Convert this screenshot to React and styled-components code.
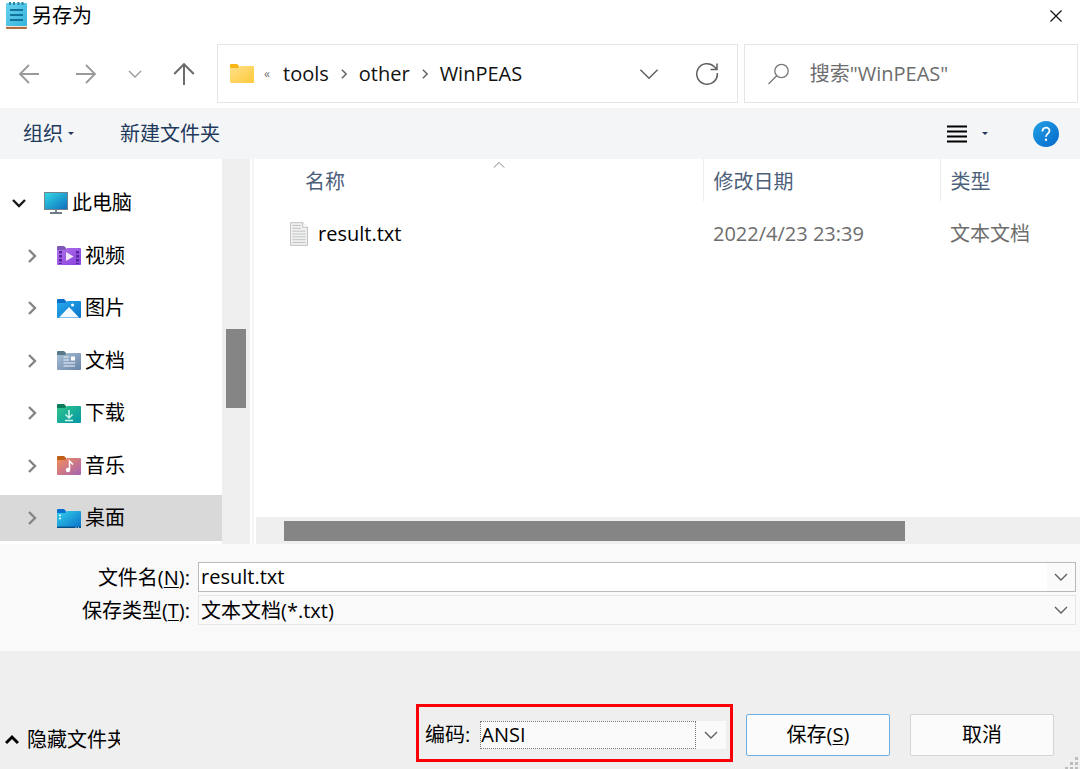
import React from "react";
import styled, { createGlobalStyle } from "styled-components";

const GlobalStyle = createGlobalStyle`
  * {
    box-sizing: border-box;
  }
  body {
    margin: 0;
    background: #fff;
    color: #000;
  }
  body, button, input, select {
    font-family: "Open Sans", "Noto Sans CJK SC", sans-serif;
    font-size: 20px;
    line-height: 28px;
  }
  button {
    padding: 0;
    border: none;
    background: none;
    color: inherit;
    cursor: pointer;
  }
  svg {
    display: block;
    flex: none;
  }
  u {
    text-decoration-thickness: 1px;
    text-underline-offset: 2px;
  }
`;

const Dialog = styled.div`
  display: flex;
  flex-direction: column;
  min-height: 100vh;
`;
const TitleBar = styled.header`
  display: flex;
  align-items: center;
  gap: 5px;
  height: 32px;
  padding: 0 17px 0 6px;
`;
const Title = styled.h1`
  flex: 1;
  margin: 0;
  font-size: 20px;
  font-weight: 400;
`;
const NavBar = styled.nav`
  display: flex;
  align-items: center;
  gap: 6px;
  padding: 12px 2px 5px 0;
`;
const NavButtons = styled.div`
  display: flex;
  align-items: center;
  gap: 25px;
  width: 211px;
  padding-left: 17px;
`;
const IconButton = styled.button`
  display: flex;
  align-items: center;
  justify-content: center;
  flex: none;
  width: ${(p) => p.$width || 24}px;
  height: 30px;
  color: ${(p) => p.$color || "#5f5f5f"};
`;
const AddressBar = styled.div`
  display: flex;
  align-items: center;
  flex: 1;
  height: 59px;
  padding: 0 18px 0 12px;
  border: 1px solid #e5e5e5;
`;
const Overflow = styled.span`
  width: 29px;
  padding-left: 10px;
  color: #777;
  font-size: 12px;
`;
const Crumbs = styled.div`
  display: flex;
  align-items: center;
  flex: 1;
  gap: 10px;
  color: #666;
`;
const Crumb = styled.a`
  color: #111;
  text-decoration: none;
`;
const AddressTools = styled.div`
  display: flex;
  gap: 34px;
`;
const SearchBox = styled.label`
  display: flex;
  align-items: center;
  gap: 20px;
  width: 31%;
  height: 59px;
  padding: 0 22px;
  border: 1px solid #e5e5e5;
  color: #777;
`;
const SearchInput = styled.input`
  flex: 1;
  min-width: 0;
  padding: 0;
  border: none;
  outline: none;
  background: none;

  &::placeholder {
    color: #6d6d6d;
    opacity: 1;
  }
`;
const Toolbar = styled.div`
  display: flex;
  align-items: center;
  height: 51px;
  padding: 0 21px 0 23px;
  background: #f4f5f7;
  color: #1e395b;
`;
const ToolbarButton = styled.button`
  display: flex;
  align-items: center;
  gap: 5px;
  margin-right: ${(p) => p.$space || 0}px;
`;
const ToolbarRight = styled.div`
  display: flex;
  align-items: center;
  gap: 45px;
  margin-left: auto;
`;
const ViewButton = styled.button`
  display: flex;
  align-items: center;
  gap: 15px;
`;
const Triangle = styled.span`
  border: solid transparent;
  border-width: 3px 3px 0;
  border-top-color: #1e395b;
`;

const Body = styled.main`
  display: flex;
  flex: 1;
`;
const Tree = styled.ul`
  display: flex;
  flex-direction: column;
  justify-content: space-between;
  width: 222px;
  margin: 0;
  padding: 21px 0 3px;
  list-style: none;
`;
const TreeRow = styled.li`
  display: flex;
  align-items: center;
  height: 46px;
  padding-left: ${(p) => (p.$root ? 12 : 25)}px;
  background: ${(p) => (p.$selected ? "#d9d9d9" : "none")};
`;
const Expander = styled.button`
  display: flex;
  justify-content: center;
  width: 14px;
  margin-right: 18px;
  color: ${(p) => (p.$open ? "#1a1a1a" : "#858585")};
`;
const TreeLink = styled.a`
  display: flex;
  align-items: center;
  gap: 4px;
  color: #000;
  text-decoration: none;
`;
const VerticalTrack = styled.div`
  display: flex;
  flex-direction: column;
  width: 28px;
  padding: 0 4px;
  background: #efefef;
`;
const HorizontalTrack = styled.div`
  display: flex;
  height: 27px;
  padding: 4px 0 3px;
  background: #efefef;
`;
const Space = styled.div`
  flex: ${(p) => p.$size} 1 0;
`;
const Thumb = styled.div`
  flex: ${(p) => p.$size} 1 0;
  background: #858585;
`;
const Files = styled.section`
  display: flex;
  flex-direction: column;
  justify-content: space-between;
  flex: 1;
  margin-left: 2px;
  padding-left: 2px;
  border-left: 2px solid #f4f4f4;
`;
const FileTable = styled.table`
  width: 100%;
  border-collapse: collapse;
  table-layout: fixed;
`;
const HeadCell = styled.th`
  position: relative;
  width: ${(p) => p.$width || "auto"};
  height: 42px;
  padding: 4px 0 0 ${(p) => p.$indent || 10}px;
  border-right: ${(p) => (p.$last ? "none" : "1px solid #ececec")};
  color: #4c607a;
  font-weight: 400;
  text-align: left;
`;
const SortMark = styled.span`
  position: absolute;
  top: 0;
  left: 53%;
  color: #6d6d6d;
`;
const Cell = styled.td`
  height: 66px;
  padding: 0 0 0 ${(p) => p.$indent || 10}px;
  color: #6d6d6d;
`;
const FileName = styled.span`
  display: flex;
  align-items: center;
  gap: 10px;
  color: #000;
`;

const Form = styled.section`
  display: grid;
  grid-template-columns: 190px 1fr;
  align-content: start;
  gap: 3px 8px;
  height: 107px;
  padding: 18px 4px 0 0;
  background: #f9f9f9;
`;
const FieldLabel = styled.label`
  padding-top: 2px;
  text-align: right;
`;
const Combo = styled.div`
  display: flex;
  height: 30px;
  border: 1px solid ${(p) => (p.$plain ? "#e6e6e6" : "#b9b9b9")};
  background: ${(p) => (p.$plain ? "#fafafa" : "#fff")};
`;
const ComboInput = styled.input`
  flex: 1;
  min-width: 0;
  padding: 0 0 0 2px;
  border: none;
  outline: none;
  background: none;
`;
const SelectWrap = styled.div`
  display: grid;
  grid-template-columns: 1fr 28px;
  align-items: center;
  flex: 1;
  color: #5f5f5f;

  select,
  svg {
    grid-row: 1;
  }
  svg {
    grid-column: 2;
    justify-self: center;
    pointer-events: none;
  }
`;
const Select = styled.select`
  grid-column: 1 / 3;
  height: 28px;
  padding: 2px 0 0 2px;
  border: none;
  outline: none;
  background: none;
  color: #000;
  line-height: 26px;
  appearance: none;
`;
const DropButton = styled.button`
  display: flex;
  align-items: center;
  justify-content: center;
  width: 28px;
  background: #fafafa;
  color: #5f5f5f;
`;

const Footer = styled.footer`
  position: relative;
  display: flex;
  align-items: flex-end;
  height: 118px;
  padding: 0 26px 7px 5px;
  background: #efefef;
`;
const HideButton = styled.button`
  display: flex;
  align-items: center;
  gap: 8px;
  height: 44px;
  margin-right: auto;
`;
const HideLabel = styled.span`
  width: 93px;
  overflow: hidden;
  white-space: nowrap;
  text-align: left;
`;
const Encoding = styled.div`
  display: flex;
  align-items: center;
  gap: 10px;
  width: 317px;
  height: 58px;
  margin-right: 13px;
  padding: 4px 4px 0 6px;
  border: 3px solid #fb0007;
`;
const EncodingBox = styled(SelectWrap)`
  grid-template-columns: 216px 1fr;
  height: 28px;
  background: #fafafa;

  select {
    padding: 0 0 0 1px;
  }
`;
const EncodingFocus = styled.span`
  grid-row: 1;
  grid-column: 1;
  align-self: stretch;
  border: 1px dotted #777;
  pointer-events: none;
`;
const Actions = styled.div`
  display: flex;
  gap: 20px;
  padding-bottom: 6px;
`;
const ActionButton = styled.button`
  width: 144px;
  height: 42px;
  border: 1px solid ${(p) => (p.$primary ? "#6aaee3" : "#d5d5d5")};
  border-radius: 2px;
  background: #fbfbfb;
`;
const Grip = styled.svg`
  position: absolute;
  right: 0;
  bottom: 0;
`;

const paths = {
  down: "M1 4l6 6 6-6",
  up: "M1 10l6-6 6 6",
  right: "M4 1l6 6-6 6",
};

const Chevron = ({ dir = "down", size = 14, stroke = 1 }) => (
  <svg width={size} height={size} viewBox="0 0 14 14" fill="none" stroke="currentColor" strokeWidth={stroke}>
    <path d={paths[dir]} />
  </svg>
);

const Arrow = ({ angle = 0, size = 22 }) => (
  <svg width={size} height={size} viewBox="0 0 22 22" fill="none" stroke="currentColor" strokeWidth="1.8">
    <g transform={`rotate(${angle} 11 11)`}>
      <path d="M21 11H2M11 2l-9 9 9 9" />
    </g>
  </svg>
);

const NotepadIcon = () => (
  <svg width="21" height="28" viewBox="0 0 21 28">
    <defs>
      <linearGradient id="pad" x1="0" y1="0" x2="1" y2="1">
        <stop offset="0" stopColor="#6ad2ee" />
        <stop offset="1" stopColor="#35b3dc" />
      </linearGradient>
    </defs>
    <rect y="22" width="21" height="5" rx="1" fill="#b36a3c" />
    <rect y="22" width="21" height="3" fill="#f1e6de" />
    <rect y="1" width="21" height="23" rx="1" fill="url(#pad)" />
    <path d="M4 0v3M8 0v3M12.500 0v3M16.500 0v3" stroke="#2387a8" strokeWidth="2" />
    <path d="M4 8h13M4 13h13M4 18h13" stroke="#12749a" strokeWidth="1.8" />
  </svg>
);

const folderColors = {
  yellow: ["#ffe08a", "#ffca3a", "#f9b716"],
  video: ["#b273ed", "#8840dc", "#8059b8"],
  picture: ["#27abee", "#0a73c9", "#0a6fc9"],
  document: ["#a9bfd6", "#6885a6", "#587987"],
  download: ["#2fc58c", "#0496a5", "#0b7d5b"],
  music: ["#f78e57", "#a463b5", "#bf601a"],
  desktop: ["#33d2ec", "#0a6fc8", "#0a6fd0"],
};

const folderMarks = {
  video: (
    <>
      <path d="M3.500 5v13M20.500 5v13" stroke="#54259c" strokeWidth="3" strokeDasharray="2.500 1.500" />
      <path d="M9 6v9l7.500-4.500z" fill="#f1e9fa" />
    </>
  ),
  picture: (
    <>
      <path d="M2 18.500L12 8l10 10.500z" fill="#f1f8ff" />
      <circle cx="15.500" cy="6" r="1.500" fill="#fff" />
    </>
  ),
  document: (
    <>
      <path d="M6.500 6H12M6.500 9H12M6.500 12h11.500M6.500 15h11.500" stroke="#eef4fa" strokeWidth="1.200" />
      <rect x="14" y="5.500" width="4" height="4" fill="#fff" />
    </>
  ),
  download: <path d="M12 6v8M8.500 10.500L12 14l3.500-3.500M8 16.500h8" fill="none" stroke="#d5f8ee" strokeWidth="1.500" />,
  music: (
    <>
      <circle cx="11" cy="14" r="2.200" fill="#fff" />
      <path d="M12.500 14V5l3.500 3.500" fill="none" stroke="#fff" strokeWidth="1.500" />
    </>
  ),
  desktop: (
    <>
      <path d="M2 6.500h2M2 9.500h2" stroke="#e5fbff" strokeWidth="1.500" />
      <path d="M0 18.300h24" stroke="#084c84" strokeWidth="1.400" />
      <path d="M18.500 18.300h1M21 18.300h1" stroke="#c7e6f8" strokeWidth="1" />
    </>
  ),
};

const FolderIcon = ({ kind }) => {
  const [from, to, tab] = folderColors[kind];
  return (
    <svg width="24" height="19" viewBox="0 0 24 19">
      <defs>
        <linearGradient id={kind} x1="0" y1="0" x2="1" y2="1">
          <stop offset="0" stopColor={from} />
          <stop offset="1" stopColor={to} />
        </linearGradient>
      </defs>
      <path d="M0 1q0-1 1-1h6l2 2v3H0z" fill={tab} />
      <path d="M0 4h8l2-2h13q1 0 1 1v15q0 1-1 1H1q-1 0-1-1z" fill={`url(#${kind})`} />
      {folderMarks[kind]}
    </svg>
  );
};

const ComputerIcon = () => (
  <svg width="24" height="22" viewBox="0 0 24 22">
    <defs>
      <linearGradient id="screen" x1="0" y1="0" x2="1" y2="1">
        <stop offset="0" stopColor="#35dbe6" />
        <stop offset="1" stopColor="#0b6dbd" />
      </linearGradient>
    </defs>
    <rect x="0.500" y="0.500" width="23" height="17" fill="url(#screen)" stroke="#74828c" />
    <path d="M12 18v3M6 21h12" stroke="#6f7c85" strokeWidth="1.800" />
  </svg>
);

const TextFileIcon = () => (
  <svg width="18" height="24" viewBox="0 0 19 25">
    <path d="M.5.500h13l5 5v19H.5z" fill="#f0f1f0" stroke="#bcbfbc" />
    <path d="M13.500.500v5h5" fill="#fff" stroke="#bcbfbc" />
    <path d="M2.500 3.500h9M2.500 6.500h9M2.500 9.500h14M2.500 12.500h14M2.500 15.500h14M2.500 18.500h14M2.500 21.500h14" stroke="#bdc1bf" />
  </svg>
);

const RefreshIcon = () => (
  <svg width="24" height="24" viewBox="0 0 24 24" fill="none" stroke="currentColor" strokeWidth="1.500">
    <path d="M22.300 11a10.300 10.300 0 1 1-3-6.300L22 7.300M22 1.500v6h-6.500" />
  </svg>
);

const SearchIcon = () => (
  <svg width="23" height="22" viewBox="0 0 23 22" fill="none" stroke="currentColor" strokeWidth="1.300">
    <circle cx="14.500" cy="8" r="6.700" />
    <path d="M9.700 12.800L1.500 21" />
  </svg>
);

const ListIcon = () => (
  <svg width="20" height="18" viewBox="0 0 20 18" stroke="#000" strokeWidth="1.800">
    <path d="M0 1.500h20M0 6.500h20M0 11.500h20M0 16.500h20" />
  </svg>
);

const HelpIcon = () => (
  <svg width="26" height="26" viewBox="0 0 26 26" fill="none">
    <defs>
      <linearGradient id="help" x1="0" y1="0" x2="1" y2="1">
        <stop offset="0" stopColor="#22a3e6" />
        <stop offset="1" stopColor="#0567cb" />
      </linearGradient>
    </defs>
    <circle cx="13" cy="13" r="13" fill="url(#help)" />
    <path d="M9.500 10.500c0-5 7-5 7-.800 0 2.800-3.500 3-3.500 6" stroke="#fff" strokeWidth="1.800" />
    <circle cx="13" cy="18.800" r="1.200" fill="#fff" />
  </svg>
);

const CloseIcon = () => (
  <svg width="12" height="12" viewBox="0 0 12 12" stroke="#111" strokeWidth="1.200">
    <path d="M.5.500l11 11M11.500.500l-11 11" />
  </svg>
);

const crumbs = ["tools", "other", "WinPEAS"];

const folders = [
  { name: "视频", kind: "video" },
  { name: "图片", kind: "picture" },
  { name: "文档", kind: "document" },
  { name: "下载", kind: "download" },
  { name: "音乐", kind: "music" },
  { name: "桌面", kind: "desktop", selected: true },
];

const Navigation = () => (
  <NavBar>
    <NavButtons>
      <IconButton $color="#9a9a9a" aria-label="后退">
        <Arrow />
      </IconButton>
      <IconButton $width={40} $color="#9a9a9a" aria-label="前进">
        <Arrow angle={180} />
      </IconButton>
      <IconButton $width={8} $color="#9a9a9a" aria-label="最近位置">
        <Chevron stroke={1.4} />
      </IconButton>
      <IconButton $width={40} $color="#6a6a6a" aria-label="上移">
        <Arrow angle={90} size={24} />
      </IconButton>
    </NavButtons>
    <AddressBar>
      <FolderIcon kind="yellow" />
      <Overflow>«</Overflow>
      <Crumbs>
        {crumbs.map((crumb, i) => (
          <React.Fragment key={crumb}>
            {i > 0 && <Chevron dir="right" size={10} stroke={2.2} />}
            <Crumb href="#">{crumb}</Crumb>
          </React.Fragment>
        ))}
      </Crumbs>
      <AddressTools>
        <IconButton aria-label="以前的位置">
          <Chevron size={20} />
        </IconButton>
        <IconButton aria-label="刷新">
          <RefreshIcon />
        </IconButton>
      </AddressTools>
    </AddressBar>
    <SearchBox>
      <SearchIcon />
      <SearchInput type="text" placeholder={'搜索"WinPEAS"'} aria-label="搜索" />
    </SearchBox>
  </NavBar>
);

const FolderTree = () => (
  <Tree>
    <TreeRow $root>
      <Expander $open aria-label="折叠">
        <Chevron stroke={2.4} />
      </Expander>
      <TreeLink href="#">
        <ComputerIcon />
        此电脑
      </TreeLink>
    </TreeRow>
    {folders.map((folder) => (
      <TreeRow key={folder.kind} $selected={folder.selected}>
        <Expander aria-label="展开">
          <Chevron dir="right" stroke={2.4} />
        </Expander>
        <TreeLink href="#">
          <FolderIcon kind={folder.kind} />
          {folder.name}
        </TreeLink>
      </TreeRow>
    ))}
  </Tree>
);

const FileList = () => (
  <Files>
    <FileTable>
      <thead>
        <tr>
          <HeadCell $width="447px" $indent={49}>
            名称
            <SortMark>
              <Chevron dir="up" size={12} />
            </SortMark>
          </HeadCell>
          <HeadCell $width="237px">修改日期</HeadCell>
          <HeadCell $last>类型</HeadCell>
        </tr>
      </thead>
      <tbody>
        <tr>
          <Cell $indent={34}>
            <FileName>
              <TextFileIcon />
              result.txt
            </FileName>
          </Cell>
          <Cell>2022/4/23 23:39</Cell>
          <Cell>文本文档</Cell>
        </tr>
      </tbody>
    </FileTable>
    <HorizontalTrack>
      <Space $size={28} />
      <Thumb $size={621} />
      <Space $size={175} />
    </HorizontalTrack>
  </Files>
);

const App = () => (
  <Dialog>
    <GlobalStyle />
    <TitleBar>
      <NotepadIcon />
      <Title>另存为</Title>
      <IconButton $width={14} aria-label="关闭">
        <CloseIcon />
      </IconButton>
    </TitleBar>
    <Navigation />
    <Toolbar>
      <ToolbarButton $space={46}>
        组织
        <Triangle />
      </ToolbarButton>
      <ToolbarButton>新建文件夹</ToolbarButton>
      <ToolbarRight>
        <ViewButton aria-label="更改视图">
          <ListIcon />
          <Triangle />
        </ViewButton>
        <button aria-label="帮助">
          <HelpIcon />
        </button>
      </ToolbarRight>
    </Toolbar>
    <Body>
      <FolderTree />
      <VerticalTrack>
        <Space $size={170} />
        <Thumb $size={80} />
        <Space $size={136} />
      </VerticalTrack>
      <FileList />
    </Body>
    <Form>
      <FieldLabel htmlFor="filename">
        文件名(<u>N</u>):
      </FieldLabel>
      <Combo>
        <ComboInput id="filename" type="text" defaultValue="result.txt" />
        <DropButton aria-label="文件名列表">
          <Chevron stroke={1.4} />
        </DropButton>
      </Combo>
      <FieldLabel htmlFor="filetype">
        保存类型(<u>T</u>):
      </FieldLabel>
      <Combo $plain>
        <SelectWrap>
          <Select id="filetype">
            <option>文本文档(*.txt)</option>
          </Select>
          <Chevron stroke={1.4} />
        </SelectWrap>
      </Combo>
    </Form>
    <Footer>
      <HideButton>
        <Chevron dir="up" stroke={3} />
        <HideLabel>隐藏文件夹</HideLabel>
      </HideButton>
      <Encoding>
        <label htmlFor="encoding">编码:</label>
        <EncodingBox>
          <Select id="encoding">
            <option>ANSI</option>
          </Select>
          <EncodingFocus />
          <Chevron stroke={1.4} />
        </EncodingBox>
      </Encoding>
      <Actions>
        <ActionButton $primary>
          保存(<u>S</u>)
        </ActionButton>
        <ActionButton>取消</ActionButton>
      </Actions>
      <Grip width="15" height="12" viewBox="0 0 15 12" fill="#bdbdbd">
        <path d="M10 0h3v3h-3zM5 5h3v3H5zM10 5h3v3h-3zM0 10h3v2H0zM5 10h3v2H5zM10 10h3v2h-3z" />
      </Grip>
    </Footer>
  </Dialog>
);

export default App;
